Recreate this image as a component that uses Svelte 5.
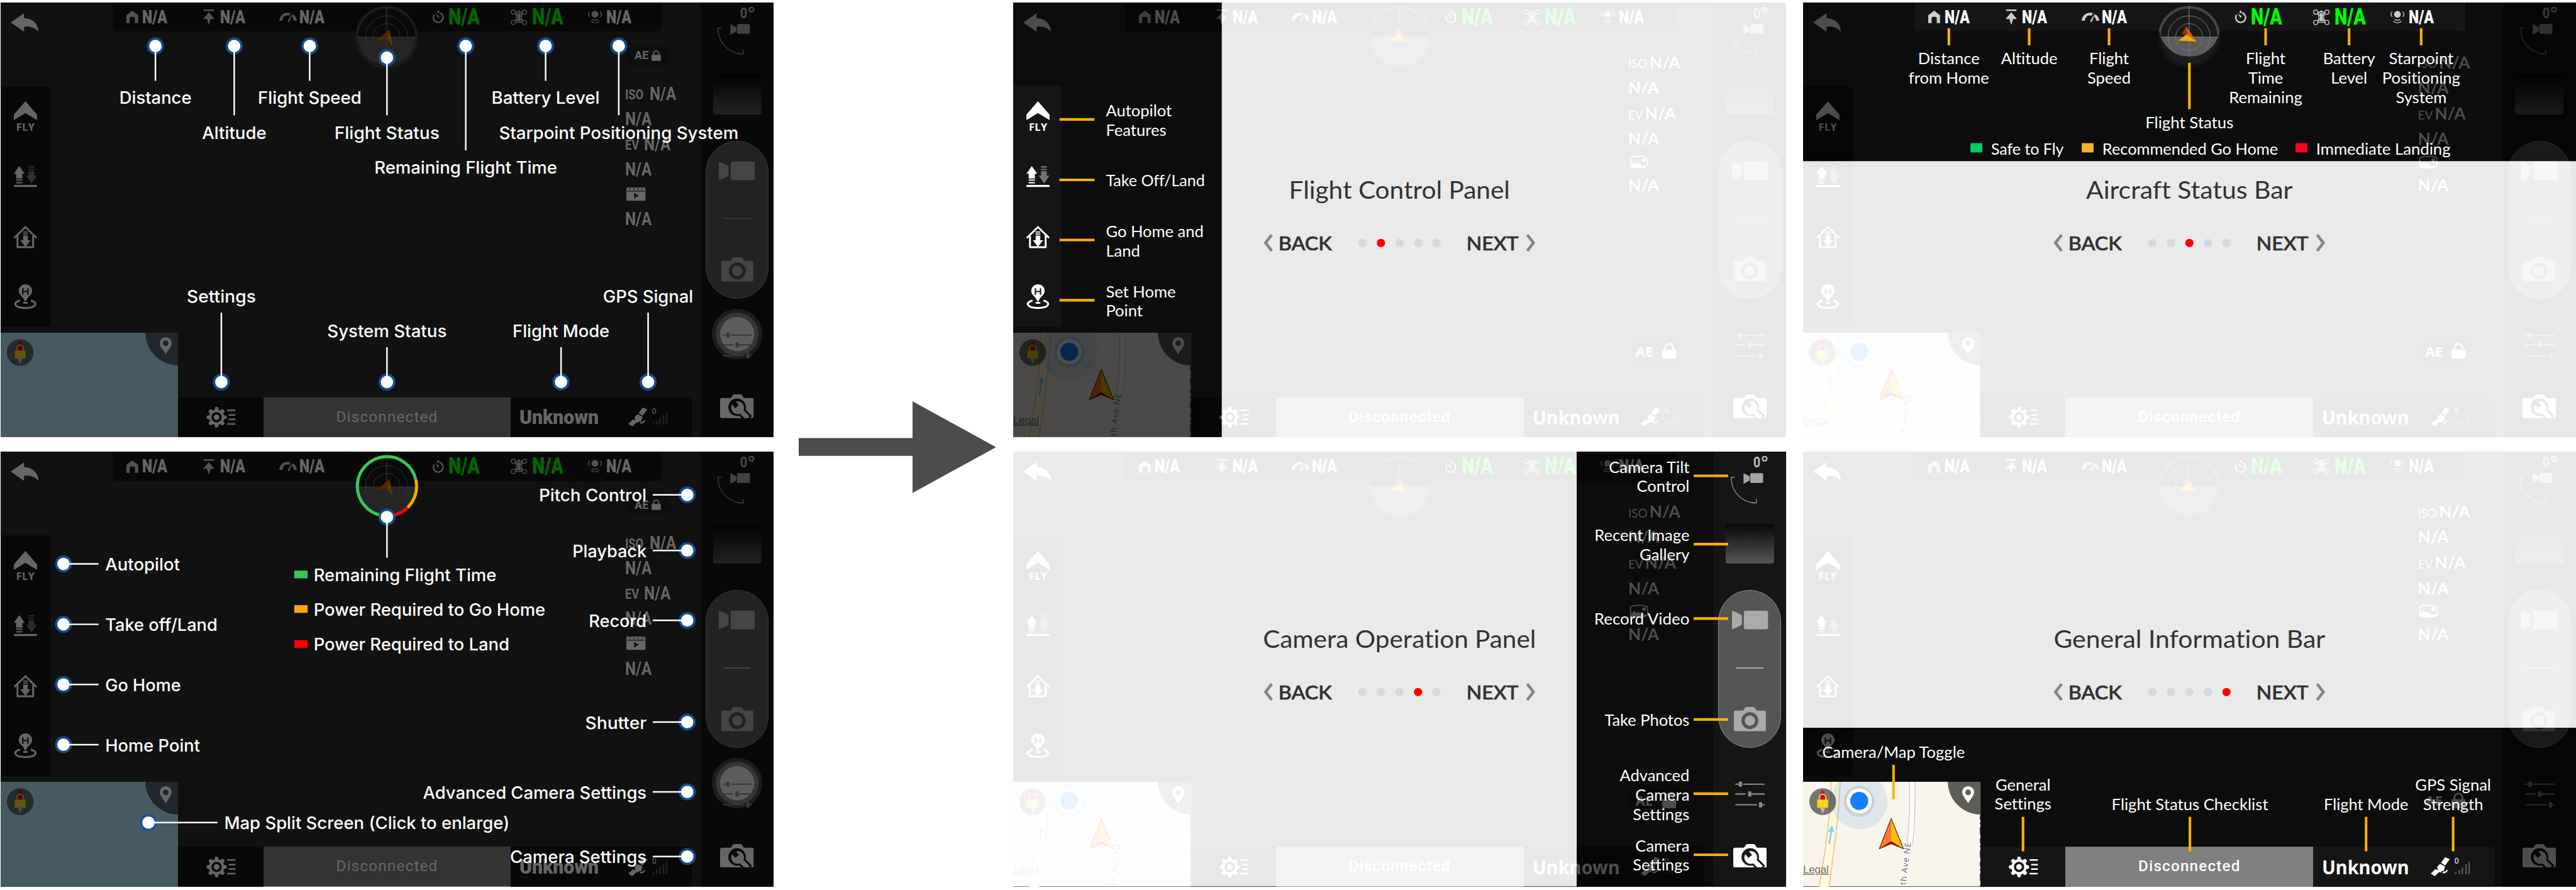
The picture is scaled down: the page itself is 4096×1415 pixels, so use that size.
<script>
  const blue = {
    font: 'sans',
    size: 33,
    rise: 12,
    lead: 37.5
  };
  const amber = { font: 'lato', size: 31.2, rise: 11, lead: 37.5 };

  // Text: x, y (vertical centre of the block), lines, anchor, optional width
  const screens = [
    {
      id: 'overview-status',
      gen: 'old',
      style: blue,
      marks: [
        [300.5, 84.4, 300.5, 152], [453.5, 84.4, 453.5, 219], [600, 84.4, 600, 152],
        [750, 107, 750, 219], [903, 84.4, 903, 287], [1058, 84.4, 1058, 152],
        [1200, 84.4, 1200, 219], [428.5, 736.7, 428.5, 602], [750, 736.7, 750, 669],
        [1088, 736.7, 1088, 669], [1257, 736.7, 1257, 602]
      ],
      texts: [
        [300.5, 185, ['Distance'], 'middle', 140], [453.5, 252.5, ['Altitude'], 'middle', 125],
        [600, 185, ['Flight Speed'], 'middle', 201], [750, 252.5, ['Flight Status'], 'middle', 204],
        [903, 320, ['Remaining Flight Time'], 'middle', 355], [1058, 185, ['Battery Level'], 'middle', 210],
        [1200, 252.5, ['Starpoint Positioning System'], 'middle', 465],
        [428.5, 570.5, ['Settings'], 'middle', 134], [1257, 570.5, ['GPS Signal'], 'middle', 175],
        [750, 638, ['System Status'], 'middle', 232], [1088, 638, ['Flight Mode'], 'middle', 188]
      ]
    },
    {
      id: 'flight-control',
      gen: 'new',
      style: amber,
      title: 'Flight Control Panel',
      step: 1,
      width: 429,
      dark: 'M0 0H405V844H0Z',
      light: 'M405 0H1501V844H405Z',
      hole: 'M0 162H89a6 6 0 0 1 6 6V624a6 6 0 0 1-6 6H0Z',
      bars: [[90, 227, 158, 227], [90, 344.4, 158, 344.4], [90, 461, 158, 461], [90, 578, 158, 578]],
      texts: [
        [180, 229, ['Autopilot', 'Features'], 'start'], [180, 346, ['Take Off/Land'], 'start', 192],
        [180, 463, ['Go Home and', 'Land'], 'start'], [180, 580, ['Set Home', 'Point'], 'start']
      ]
    },
    {
      id: 'aircraft-status',
      gen: 'new',
      style: amber,
      title: 'Aircraft Status Bar',
      step: 2,
      width: 401,
      dark: 'M0 0H1501V308H0Z',
      light: 'M0 308H1501V844H0Z',
      hole: 'M217 0H1284V50a6 6 0 0 1-6 6H809A60 60 0 0 1 691 56H223a6 6 0 0 1-6-6Z',
      bars: [
        [283, 50, 283, 83], [439, 50, 439, 83], [594, 50, 594, 83], [750, 117, 750, 207],
        [898, 50, 898, 83], [1060, 50, 1060, 83], [1200, 50, 1200, 83]
      ],
      texts: [
        [283, 128, ['Distance', 'from Home'], 'middle'], [439, 109, ['Altitude'], 'middle'],
        [594, 128, ['Flight', 'Speed'], 'middle'], [750, 233, ['Flight Status'], 'middle', 171],
        [898, 146.5, ['Flight', 'Time', 'Remaining'], 'middle'], [1060, 128, ['Battery', 'Level'], 'middle'],
        [1200, 146.5, ['Starpoint', 'Positioning', 'System'], 'middle'],
        [365, 284.5, ['Safe to Fly'], 'start', 141], [581, 284.5, ['Recommended Go Home'], 'start', 341],
        [996, 284.5, ['Immediate Landing'], 'start', 261]
      ],
      swatches: [[325, 273, 23, 18, '#00cc66'], [541, 273, 23, 18, '#ffae30'], [956, 273, 23, 18, '#ff0020']]
    },
    {
      id: 'overview-camera',
      gen: 'old',
      style: blue,
      gauge: true,
      marks: [
        [750, 127, 750, 206], [122, 218, 190, 218], [122, 335.3, 190, 335.3], [122, 452, 190, 452],
        [122, 569, 190, 569], [287, 720, 421, 720], [1333, 84, 1266, 84], [1333, 192, 1266, 192],
        [1333, 327.6, 1266, 327.6], [1333, 525, 1266, 525], [1333, 660.6, 1266, 660.6], [1333, 786, 1266, 786]
      ],
      texts: [
        [203, 219, ['Autopilot'], 'start', 145], [203, 336, ['Take off/Land'], 'start', 218],
        [203, 453, ['Go Home'], 'start', 147], [203, 570, ['Home Point'], 'start', 184],
        [607.6, 239.5, ['Remaining Flight Time'], 'start', 355],
        [607.6, 307, ['Power Required to Go Home'], 'start', 450],
        [607.6, 374, ['Power Required to Land'], 'start', 380],
        [434, 721, ['Map Split Screen (Click to enlarge)'], 'start', 554],
        [1254, 85, ['Pitch Control'], 'end', 209], [1254, 193, ['Playback'], 'end', 144],
        [1254, 328.5, ['Record'], 'end', 112], [1254, 526, ['Shutter'], 'end', 119],
        [1254, 661.5, ['Advanced Camera Settings'], 'end', 434], [1254, 787, ['Camera Settings'], 'end', 265]
      ],
      swatches: [[570, 231, 26, 15, '#34c759'], [570, 298, 26, 15, '#f5a800'], [570, 366, 26, 15, '#ff0000']]
    },
    {
      id: 'camera-operation',
      gen: 'new',
      style: amber,
      title: 'Camera Operation Panel',
      step: 3,
      width: 530,
      dark: 'M1094 0H1501V844H1094Z',
      light: 'M0 0H1094V844H0Z',
      hole: 'M1359 0H1501V844H1359Z',
      bars: [
        [1321, 47, 1388, 47], [1321, 179.6, 1388, 179.6], [1321, 324, 1388, 324],
        [1321, 520, 1388, 520], [1321, 664, 1388, 664], [1321, 782.6, 1388, 782.6]
      ],
      texts: [
        [1313, 49, ['Camera Tilt', 'Control'], 'end'], [1313, 181, ['Recent Image', 'Gallery'], 'end'],
        [1313, 325, ['Record Video'], 'end', 185], [1313, 521.6, ['Take Photos'], 'end', 165],
        [1313, 666.6, ['Advanced', 'Camera', 'Settings'], 'end'], [1313, 783.7, ['Camera', 'Settings'], 'end']
      ]
    },
    {
      id: 'general-information',
      gen: 'new',
      style: amber,
      title: 'General Information Bar',
      step: 4,
      width: 527,
      dark: 'M0 536H1501V844H0Z',
      light: 'M0 0H1501V536H0Z',
      hole: 'M0 641H345V767H1336a6 6 0 0 1 6 6V838a6 6 0 0 1-6 6H0Z',
      bars: [
        [175.6, 608, 175.6, 675], [427, 709, 427, 776], [751, 709, 751, 776],
        [1093, 709, 1093, 776], [1262, 709, 1262, 776]
      ],
      texts: [
        [175.6, 583.7, ['Camera/Map Toggle'], 'middle', 277], [427, 665.5, ['General', 'Settings'], 'middle'],
        [751, 684.8, ['Flight Status Checklist'], 'middle', 304], [1093, 684.8, ['Flight Mode'], 'middle', 164],
        [1262, 666, ['GPS Signal', 'Strength'], 'middle']
      ]
    }
  ];
  const metaOld = [['ISO', 'N/A'], ['', 'N/A'], ['EV', 'N/A'], ['', 'N/A'], ['clip', ''], ['', 'N/A']];
  const metaNew = [['ISO', 'N/A'], ['', 'N/A'], ['EV', 'N/A'], ['', 'N/A'], ['photo', ''], ['', 'N/A']];
</script>

{#snippet statusBar()}
  <div class="topbar">
    <div class="stat">
      <svg class="i-home" viewBox="0 0 23 24"><path d="M11.5 0 23 9v15h-6.5v-9a3 3 0 0 0-3-3h-4a3 3 0 0 0-3 3v9H0V9z" /></svg>
      <span class="na">N/A</span>
    </div>
    <div class="stat s-alt">
      <svg class="i-alt" viewBox="0 0 22 29"><path d="M1 0h20v3H1zM11 5.500 22 18.500h-7.500L11.500 29h-1L7.500 18.500H0z" /></svg>
      <span class="na">N/A</span>
    </div>
    <div class="stat s-speed">
      <svg class="i-speed" viewBox="0 0 34 18">
        <path d="M0 16C1 4 11-2 22 1L19 6C12 4 7 8 6 16zM26 3c5 3 8 8 8 13h-6c0-3-1-6-4-8z" />
        <path d="M25.500 1 20 18l-4-.5z" />
      </svg>
      <span class="na">N/A</span>
    </div>
    <div class="stat s-time">
      <svg class="i-time" viewBox="0 0 24 24">
        <path class="ln" d="M15 4.200A9.500 9.500 0 1 1 4 8" />
        <circle cx="12" cy="2.300" r="2.300" />
        <path d="M6 5l8 6-2.500 3z" />
      </svg>
      <span class="na go">N/A</span>
    </div>
    <div class="stat s-batt">
      <svg class="i-batt" viewBox="0 0 32 28">
        <g class="thin">
          <path d="M8 8 5 8a4 4 0 1 1 4-4l0 4 4 3M24 8l3 0a4 4 0 1 0-4-4l0 4-4 3M8 20l-3 0a4 4 0 1 0 4 4l0-4 4-3M24 20l3 0a4 4 0 1 1-4 4l0-4-4-3" />
          <path d="M11 4h10v20H11z" />
        </g>
        <path d="M13 6h6v16h-6zM14 1h4v3h-4z" />
      </svg>
      <span class="na go">N/A</span>
    </div>
    <div class="stat s-star">
      <svg class="i-star" viewBox="0 0 27 25">
        <circle cx="13.500" cy="7" r="6.600" />
        <path class="thin" d="M3.500 2C0 5 0 9 3.500 12M23.500 2c3.500 3 3.500 7 0 10M8 17c3 2 8 2 11 0M5.500 20.500c5 4 11 4 16 0" />
      </svg>
      <span class="na">N/A</span>
    </div>
  </div>
{/snippet}

{#snippet compass(gen, gauge)}
  <svg class="compass" viewBox="-62 -62 124 124">
    {#if !gauge}<circle class="bezel" r="57.500" />{/if}
    <circle class="dial" r="55" />
    <path class="ground" d="M-55 0A55 55 0 0 0 55 0z" />
    <circle class="orbit" r="41" />
    <circle class="orbit" r="26" />
    <path class="cross" d="M-60 .5H60M0-60V60" />
    {#if gen === 'old'}
      <path fill="#c9620c" d="M5-15-21 9 1 3z" />
      <path fill="#d79b00" d="M5-15 12 19 1 3z" />
    {:else}
      <path fill="#8a3408" d="M-6-21-14-6-3-3z" />
      <path fill="#d4610e" d="M-6-21 15 9-3-3z" />
      <path fill="#f2a800" d="M-21 7-5-5 15 9z" />
    {/if}
  </svg>
{/snippet}

{#snippet map(gen)}
  <div class="map">
    <svg viewBox="0 0 345 203">
      {#if gen === 'old'}
        <rect class="water" width="345" height="203" />
      {:else}
        <rect class="land" width="345" height="203" />
        <path class="road-y" d="M54.500-2C55 45 49 75 44 125L31 206H50L61 125C66 80 71 45 72-2z" />
        <path class="kerb" d="M212-2C212 60 212 80 207 122" />
        <path class="road-w" d="M212-2C212 60 212 80 207 122" />
        <circle class="halo" cx="109" cy="37" r="55" />
        <text class="street" transform="translate(199 201) rotate(-83)" textLength="83">th Ave NE</text>
        <text class="street" transform="translate(47 212) rotate(-86)">E</text>
        <path class="lane" d="M51 121 55 92" />
        <path class="lane-head" d="M47 98 56 85 61 99 55 95z" />
        <text class="legal" x="0" y="177" textLength="50">Legal</text>
        <path class="edge" d="M344 65V203" />
        <circle class="glow" cx="109" cy="38" r="30" />
        <circle cx="109" cy="37" r="24.500" fill="#fff" />
        <circle cx="109" cy="37" r="17.500" fill="#1480ff" />
        <path fill="#ff7a2a" d="M171 71 148 130 171 118z" />
        <path fill="#ffb90f" d="M171 71 195 130 171 118z" />
        <path fill="#8c1406" d="M148 130 171 115 195 130 171 121z" />
        <path class="nose" d="M171 71 148 130 171 120 195 130z" />
      {/if}
      <path class="tag" d="M281 0H345V63.500A64 64 0 0 1 281 0z" />
      <path fill="#fff" fill-rule="evenodd" d="M320.500 8.500a11.500 11.500 0 0 1 11.500 12c0 7-8 14-11.500 21.500C317 34.500 309 27.500 309 20.500a11.500 11.500 0 0 1 11.500-12zm0 6.500a5.500 5.500 0 1 0 0 11 5.500 5.500 0 1 0 0-11z" />
      <circle class="badge" cx="38" cy="38.500" r="26" />
      <path fill="#c8003a" d="M38 15l5 9v12H33V24z" />
      <path fill="#bbb" d="M33 50h10l-5 12z" />
      <path class="shackle" d="M32 36v-6a6 6 0 0 1 12 0v6" />
      <rect x="27.500" y="34.500" width="21" height="15.500" fill="#ffd21e" />
    </svg>
  </div>
{/snippet}

{#snippet hud(s)}
  <div class="hud">
    <div class="field">
      <div class="top">
        <svg class="back" viewBox="0 0 54 36"><path d="M0 18 26 0v9.500C43 10.500 53 20 54 36 46 27 38 25.500 26 26v10z" /></svg>
        {@render statusBar()}
      </div>
      <div class="rail">
        <svg class="i-fly" viewBox="0 0 45 37"><path d="M22.500 0 45 26v10.500L22.500 23 0 36.500V26z" /></svg>
        <span class="fly">FLY</span>
        <svg class="i-take" viewBox="0 0 45 41">
          <path d="M10.500 0 21 15h-4.500v9h-12v-9H0zM4.500 26h12v2.500h-12zM4.500 31h12v2.500h-12z" />
          <rect y="36.500" width="45" height="4" rx="1.500" />
          <path class="mute" d="M28.500 0h11v3h-11zM28.500 5.500h11V8h-11zM28.500 10h11v8.500H45L34.500 34 24 18.500h4.500z" />
        </svg>
        <svg class="i-go" viewBox="0 0 45 43">
          <path class="wall" d="M2 22.500 22.500 2.500 43 22.500M7 20v21.500h30.500V20" />
          <path d="M18 11h9v2.200h-9zM18 15h9v2.200h-9zM18 19h9v9h5.500L22.500 41l-10-13H18z" />
        </svg>
        <svg class="i-pin" viewBox="0 0 45 48">
          <path d="M22.500 0a13 13 0 0 1 13 13.500c0 7-9 11-12 19.500h-2c-3-8.500-12-12.500-12-19.500A13 13 0 0 1 22.500 0z" />
          <path class="h" d="M17.500 7.500v13M27.500 7.500v13M17.500 14h10" />
          <path class="ring" d="M12 31.500C-3 35 0 46 22.500 46S48 35 33 31.500" />
          <ellipse cx="22.500" cy="36" rx="5" ry="2" />
        </svg>
      </div>
      <div class="foot">
        {@render map(s.gen)}
        <div class="infobar">
          <div class="cfg">
            <svg class="i-gear" viewBox="0 0 56 40">
              <path fill-rule="evenodd" d="M17 0h5l1.500 5.500 3 1.300L31.500 4l4 4-3 4.700 1.300 3.300 5.200 1.500v5L33.800 24l-1.300 3.300 3 4.700-4 4-5-2.800-3 1.300L22 40h-5l-1.500-5.500-3-1.300L7.500 36l-4-4 3-4.700L5.200 24 0 22.500v-5L5.200 16l1.300-3.300L3.500 8l4-4 5 2.800 3-1.300zM19.500 10a10 10 0 1 0 0 20 10 10 0 1 0 0-20z" />
              <circle cx="19.500" cy="20" r="5.500" />
              <path d="M40 5h16v3H40zM43 14h13v3H43zM43 22.500h13v3H43zM40 31.500h16v3H40z" />
            </svg>
          </div>
          <div class="sys">Disconnected</div>
          <div class="mode">
            <span class="unk">Unknown</span>
            <svg class="i-sat" viewBox="0 0 80 40">
              <path d="M28 1l9 4-9 12-8-5zM18 14l10 5-3 9-4 0-2 3-7-4 2-3-2-4zM9 24l8 5-9 9-8-5zM23 29c4 1 7-1 8-4l2 1c-1 5-5 7-10 6z" />
              <text class="zero" x="46" y="13">0</text>
              <path class="dim" d="M47 30h3v4h-3zM54 26h3v8h-3zM60 21h3v13h-3zM67 15h3v19h-3zM73 10h3v24h-3z" />
            </svg>
          </div>
        </div>
      </div>
      <div class="meta">
        {#each s.gen === 'old' ? metaOld : metaNew as [label, value]}
          <div class="row" class:pic={label === 'photo'}>
            {#if label === 'clip'}
              <svg class="i-clip" viewBox="0 0 37 26"><path fill-rule="evenodd" d="M2 0h33a2 2 0 0 1 2 2v22a2 2 0 0 1-2 2H2a2 2 0 0 1-2-2V2a2 2 0 0 1 2-2zM1.500 6.500v1.300h34V6.500zM7 1 5 5h1.500l2-4zm8 0-2 4h1.500l2-4zm8 0-2 4h1.500l2-4zm8 0-2 4h1.500l2-4zM15 10.500v11l9-5.500z" /></svg>
            {:else if label === 'photo'}
              <svg class="i-photo" viewBox="0 0 37 26">
                <path class="frame" d="M2 5C6 .5 31 .5 35 5v16c-4 4.500-29 4.500-33 0z" />
                <path d="M3 20 9 12l5 5 3-3 8 6h9v2c-6 3-26 3-31 0z" /><circle cx="28" cy="9" r="3.500" />
              </svg>
            {:else}
              {#if label}<small class={label.toLowerCase()}>{label}</small>{/if}<b>{value}</b>
            {/if}
          </div>
        {/each}
      </div>
      <div class="ae"><span>AE</span>
        <svg viewBox="0 0 28 31"><path d="M0 13h28v18H0z" /><path class="bow" d="M6 14V9a8 7.500 0 0 1 16 0v5" /></svg>
      </div>
    </div>
    <div class="side">
      <svg class="i-tilt" viewBox="0 0 82 96">
        <text class="deg" x="45" y="25.500" textLength="14" lengthAdjust="spacingAndGlyphs">0</text>
        <circle class="degree" cx="67" cy="9" r="4.300" />
        <g opacity=".62">
          <path d="M26 37 38 43v8l-12 7z" /><rect x="39" y="37" width="25" height="19" rx="2" />
        </g>
        <path class="arc" d="M9 45H2C2 72 22 95 51 95V87" />
      </svg>
      <div class="thumb"></div>
      <div class="pill">
        <svg class="i-video" viewBox="0 0 70 36"><path d="M0 0c6 2 12 4 19 9v18c-7 5-13 7-19 9z" /><rect x="23" width="47" height="36" rx="4" /></svg>
        <i></i>
        <svg class="i-cam" viewBox="0 0 62 47"><path fill-rule="evenodd" d="M3 7h15l4-6 3-1h12l3 1 4 6h15a3 3 0 0 1 3 3v34a3 3 0 0 1-3 3H3a3 3 0 0 1-3-3V10a3 3 0 0 1 3-3zM31 10a16.500 16.500 0 1 0 0 33 16.500 16.500 0 1 0 0-33z" /><circle cx="31" cy="26.500" r="10" /></svg>
      </div>
      <svg class="i-tune" viewBox="0 0 98 98">
        {#if s.gen === 'old'}
          <circle cx="49" cy="49" r="49" fill="#474747" />
          <circle cx="49" cy="49" r="42.500" fill="#858585" stroke="#4a4a4a" stroke-width="2" />
          <circle cx="49" cy="49" r="33" fill="#e8e8e8" stroke="#ccc" />
        {/if}
        <g class="sliders">
          <path d="M21 51h8M36 51h42M21 70h20M50 70h28M21 91h42M71 91h7" />
          <path class="knob" d="M28 51h6M46 70h6M67 91h6" />
        </g>
      </svg>
      <svg class="i-fix" viewBox="0 0 65 46">
        <path d="M3 7h18l4-6 2-1h13l2 1 4 6h17l2 2v35l-2 2H3l-3-2V9z" />
        <circle class="void" cx="33" cy="25" r="17" />
        <path class="grip-edge" d="M38 30 56 48" />
        <circle cx="34" cy="26" r="12.500" />
        <path class="grip" d="M36 28 54 46" />
        <path class="jaw" d="M24 13 33 24" />
      </svg>
    </div>
    {@render compass(s.gen, s.gauge)}
  </div>
{/snippet}

<main class="sheet">
  {#each screens as s (s.id)}
    <section class="screen {s.gen} {s.id}">
      {@render hud(s)}
      <svg class="notes {s.style.font}" viewBox="0 0 1501 844">
        {#if s.gen === 'old'}
          <path fill="#000" fill-opacity=".6" d="M0 0H1501V844H0Z" />
          {#if s.gauge}
            <g class="gauge" transform="translate(750 67.300)">
              <path stroke="#34c759" d="M-10 56.600A57.500 57.500 0 1 1 56-13" />
              <path stroke="#f5a800" d="M56-13A57.500 57.500 0 0 1 40 41.300" />
              <path stroke="#f00" d="M40 41.300A57.500 57.500 0 0 1 8 57" />
            </g>
          {/if}
          {#each s.marks as [x1, y1, x2, y2]}
            <circle class="outer" cx={x1} cy={y1} r="16.500" />
            <line class="lead" {x1} {y1} {x2} {y2} />
            <circle class="inner" cx={x1} cy={y1} r="12" />
          {/each}
        {:else}
          <path fill="#000" fill-opacity=".7" fill-rule="evenodd" d={s.dark + s.hole} />
          <path fill="#fff" fill-opacity=".9" d={s.light} />
          {#each s.bars as [x1, y1, x2, y2]}
            <line class="bar" {x1} {y1} {x2} {y2} />
          {/each}
        {/if}
        {#each s.swatches ?? [] as [x, y, width, height, fill]}
          <rect {x} {y} {width} {height} {fill} />
        {/each}
        {#each s.texts as [x, y, lines, anchor, w]}
          {#each lines as line, i}
            <text
              {x}
              y={y + s.style.rise + (i - (lines.length - 1) / 2) * s.style.lead}
              font-size={s.style.size}
              text-anchor={anchor}
              textLength={w}
              lengthAdjust="spacingAndGlyphs">{line}</text>
          {/each}
        {/each}
        {#if s.title}
          <text class="title" x="750" y="380.500" text-anchor="middle" textLength={s.width} lengthAdjust="spacingAndGlyphs">{s.title}</text>
          <path class="chev" d="M502 451 490 466.500 502 482M998 451 1010 466.500 998 482" />
          <text class="nav" x="515" y="481.500" textLength="104" lengthAdjust="spacingAndGlyphs">BACK</text>
          <text class="nav" x="880" y="481.500" textLength="101" lengthAdjust="spacingAndGlyphs">NEXT</text>
          {#each [0, 1, 2, 3, 4] as n}
            <circle cx={678 + n * 36} cy="466.700" r="8" fill={n === s.step ? '#f00' : '#d9d9d9'} />
          {/each}
        {/if}
      </svg>
    </section>
  {/each}
  <svg class="becomes" viewBox="0 0 383 178"><path d="M0 71.500H221V0L383 89 221 178V106H0z" /></svg>
</main>

<style>
  :global(body) {
    margin: 0;
    overflow: hidden;
    background: #fff;
  }
  .sheet {
    zoom: 0.81904;
    display: grid;
    grid-template-columns: 1501px 465px 1501px 32px 1501px;
    grid-template-rows: 844px 844px;
    row-gap: 28px;
    box-sizing: border-box;
    width: 5001px;
    height: 1728px;
    padding: 5px 0 0 1px;
    background: #fff;
    font-family: Inter, 'Liberation Sans', sans-serif;
  }
  .screen {
    position: relative;
    overflow: hidden;
    display: grid;
    color: #fff;
  }
  .screen:nth-of-type(3n + 1) { grid-column: 1; }
  .screen:nth-of-type(3n + 2) { grid-column: 3; }
  .screen:nth-of-type(3n) { grid-column: 5; }
  .screen:nth-of-type(-n + 3) { grid-row: 1; }
  .screen:nth-of-type(n + 4) { grid-row: 2; }
  .becomes {
    grid-column: 2;
    grid-row: 1 / 3;
    place-self: center start;
    width: 383px;
    height: 178px;
    margin: 10px 0 0 48px;
    fill: #4c4c4c;
  }

  svg { display: block; fill: #fff; overflow: visible; }

  .hud {
    position: relative;
    display: grid;
    grid-template-columns: 1359px 142px;
    height: 844px;
    background: #2b2b2b;
  }
  .field {
    display: grid;
    grid-template: 162px 479px 203px / 1fr;
  }
  .top { display: flex; align-items: flex-start; grid-area: 1 / 1; }
  .back { width: 54px; height: 36px; margin: 21px 143px 0 20px; }
  .topbar {
    display: grid;
    grid-template-columns: 150px 147px 297px 153px 150px 1fr;
    align-items: center;
    box-sizing: border-box;
    width: 1067px;
    height: 56.5px;
    padding-left: 27px;
    border-radius: 0 0 6px 6px;
    background: rgba(0, 0, 0, 0.5);
  }
  .stat { display: flex; align-items: center; }
  .stat svg { flex: none; fill: #cbcbcb; }
  .na {
    font: 900 36px/40px Roboto, sans-serif;
    margin-top: 1px;
    transform: scaleX(0.78);
    transform-origin: left;
  }
  .na.go { color: #0f0; font-size: 45px; }
  .i-home { width: 23px; height: 24px; margin-right: 8px; }
  .i-alt { width: 22px; height: 29px; margin-right: 10px; }
  .i-speed { width: 34px; height: 18px; margin-right: 5px; }
  .i-time { width: 24px; height: 24px; margin-right: 8px; }
  .i-batt { width: 32px; height: 28px; margin-right: 9px; }
  .i-star { width: 27px; height: 25px; margin-right: 8px; }
  .ln, .thin { fill: none; stroke: #cbcbcb; stroke-width: 3; }
  .thin { stroke-width: 1.7; }

  .compass {
    position: absolute;
    left: 688px;
    top: 5.3px;
    width: 124px;
    height: 124px;
  }
  .bezel { fill: none; stroke: #444; stroke-width: 5.5; }
  .dial { fill: #191919; }
  .ground { fill: #5c5c5c; }
  .orbit { fill: none; stroke: #777; stroke-width: 1.2; }
  .cross { stroke: #777; stroke-width: 1.5; fill: none; }

  .rail {
    grid-area: 2 / 1;
    display: flex;
    flex-direction: column;
    align-items: center;
    box-sizing: border-box;
    width: 97px;
    height: 468px;
    padding-top: 30px;
    border-radius: 0 6px 6px 0;
    background: rgba(0, 0, 0, 0.5);
  }
  .rail svg { width: 45px; flex: none; }
  .i-fly { height: 37px; }
  .fly {
    height: 88px;
    padding-top: 3px;
    box-sizing: border-box;
    font: 700 20px/20px 'Open Sans', sans-serif;
    letter-spacing: 0.5px;
  }
  .i-take { height: 41px; margin-bottom: 75px; }
  .i-go { height: 43px; margin-bottom: 71px; }
  .i-pin { height: 48px; }
  .mute { fill: #737373; }
  .wall { fill: none; stroke: #fff; stroke-width: 3.6; stroke-linejoin: round; stroke-linecap: round; }
  .h { fill: none; stroke: #171717; stroke-width: 2.6; }
  .ring { fill: none; stroke: #fff; stroke-width: 3.6; }

  .foot { grid-area: 3 / 1; display: flex; align-items: flex-end; }
  .map { width: 345px; height: 203px; overflow: hidden; }
  .map svg { width: 345px; height: 203px; overflow: hidden; }
  .water { fill: #b1e1f3; }
  .land { fill: #f9f5ed; }
  .road-y { fill: #fdfbdb; stroke: #f6c08c; stroke-width: 2; }
  .kerb { fill: none; stroke: #cfc6bc; stroke-width: 12; }
  .road-w { fill: none; stroke: #fff; stroke-width: 9; }
  .halo { fill: #4c9bf0; fill-opacity: 0.15; }
  .glow { fill: #234; fill-opacity: 0.12; }
  .street { font: 16px 'Open Sans', sans-serif; fill: #666; stroke: #fff; stroke-width: 3; paint-order: stroke; }
  .lane { stroke: #7fcff8; stroke-width: 3.5; }
  .lane-head { fill: #7fcff8; }
  .legal { font: 21px 'Liberation Sans', sans-serif; fill: #777; text-decoration: underline; }
  .edge { stroke: #555; stroke-width: 2; stroke-dasharray: 9 5 3 6 14 8; fill: none; }
  .nose { fill: none; stroke: #6b2d10; stroke-width: 1.5; stroke-linejoin: round; }
  .tag { fill: rgba(0, 0, 0, 0.62); }
  .old .tag { fill: rgba(0, 0, 0, 0.55); }
  .badge { fill: rgba(0, 0, 0, 0.52); }
  .shackle { fill: none; stroke: #ffc800; stroke-width: 2.6; }

  .infobar {
    display: grid;
    grid-template-columns: 165px 481px 351px;
    align-items: center;
    height: 77px;
    border-radius: 0 6px 6px 0;
    background: rgba(0, 0, 0, 0.5);
  }
  .i-gear { width: 57px; height: 40px; margin-left: 55px; }
  .sys {
    height: 77px;
    background: #808080;
    font: 500 29.5px/76px Roboto, sans-serif;
    letter-spacing: 1.5px;
    text-align: center;
  }
  .old .sys { font-weight: 400; }
  .mode { display: flex; align-items: center; padding-left: 17px; }
  .unk {
    width: 160px;
    font: 700 38px/40px 'Noto Sans', sans-serif;
    transform: scaleX(0.93);
    transform-origin: left;
  }
  .old .unk { font: 900 39px/40px Roboto, sans-serif; transform: scaleX(0.94); }
  .i-sat { width: 80px; height: 40px; margin-left: 51px; flex: none; }
  .unk { flex: none; }
  .zero { font: 15px Roboto, sans-serif; }
  .dim { fill: #555; }

  .meta {
    grid-area: 1 / 1 / 4 / 2;
    justify-self: start;
    margin: 91px 0 0 1194px;
    text-shadow: 0 1px 4px rgba(0, 0, 0, 0.5);
  }
  .row { height: 49.6px; display: flex; align-items: center; }
  .row small { font: 400 23px/40px Lato, sans-serif; margin: 7px 4px 0 0; }
  .row b { font: 700 32px/40px Lato, sans-serif; }
  .row.pic { height: 40px; }
  .old .meta { margin: 153px 0 0 1213px; }
  .old .row { height: 48.7px; }
  .old .row small {
    font: 700 27px/40px Roboto, sans-serif;
    margin: 3px 0 0 0;
    transform: scaleX(0.82);
    transform-origin: left;
  }
  .old .row .iso { width: 47px; }
  .old .row .ev { width: 36px; }
  .old .row b {
    font: 700 35px/40px Roboto, sans-serif;
    transform: scaleX(0.84);
    transform-origin: left;
  }
  .i-clip, .i-photo { width: 37px; height: 26px; margin-left: 2px; }
  .frame { fill: none; stroke: #fff; stroke-width: 2.2; }

  .ae {
    grid-area: 1 / 1 / 4 / 2;
    display: flex;
    align-items: center;
    justify-content: space-between;
    box-sizing: border-box;
    width: 113px;
    height: 67px;
    margin: 643px 0 0 1192px;
    padding: 0 17px 0 15px;
    border-radius: 34px;
    border: 2px solid rgba(255, 255, 255, 0.06);
    background: rgba(0, 0, 0, 0.15);
    font: 700 27px/40px 'Open Sans', sans-serif;
  }
  .ae svg { width: 27px; height: 31px; }
  .bow { fill: none; stroke: #fff; stroke-width: 3.4; }
  .old .ae {
    width: 89px;
    height: 41px;
    margin: 83px 0 0 1213px;
    padding: 0 20px 0 18px;
    border: 0;
    font: 700 22px/40px Roboto, sans-serif;
  }
  .old .ae svg { width: 18px; height: 21px; }

  .side {
    display: flex;
    flex-direction: column;
    align-items: center;
    background: rgba(0, 0, 0, 0.5);
  }
  .i-tilt { width: 82px; height: 96px; margin: 5px 0 39px 5px; }
  .deg { font: 700 30px Roboto, sans-serif; fill: #b9b9b9; }
  .degree { fill: none; stroke: #b9b9b9; stroke-width: 2.8; }
  .arc { fill: none; stroke: #999; stroke-width: 1.5; }
  .thumb { width: 94px; height: 77px; border-radius: 5px; background: linear-gradient(#080808, #555); }
  .pill {
    display: flex;
    flex-direction: column;
    align-items: center;
    justify-content: space-between;
    box-sizing: border-box;
    width: 122px;
    height: 307px;
    margin-top: 51px;
    padding: 39px 0 32px;
    border: 1.5px solid #888;
    border-radius: 61px;
    background: #555;
  }
  .pill svg { fill: #aaa; }
  .pill i { width: 54px; height: 2px; background: #aaa; }
  .i-video { width: 70px; height: 36px; }
  .i-cam { width: 62px; height: 47px; }
  .i-tune { width: 98px; height: 98px; margin-top: 19px; }
  .sliders path { stroke: #8c8c8c; stroke-width: 2.6; fill: none; }
  .sliders .knob { stroke-width: 10; }
  .i-fix { width: 65px; height: 46px; margin-top: 69px; overflow: hidden; }
  .void { fill: #171717; }
  .grip-edge { fill: none; stroke: #171717; stroke-width: 17; }
  .grip { fill: none; stroke: #fff; stroke-width: 9.5; }
  .jaw { fill: none; stroke: #171717; stroke-width: 9; }

  .notes {
    position: absolute;
    inset: 0;
    width: 1501px;
    height: 844px;
  }
  .notes text { white-space: pre; font-variant-ligatures: none; }
  .sans text { font-family: Inter, sans-serif; font-weight: 500; }
  .lato text { font-family: Lato, sans-serif; }
  .outer { fill: #17529f; fill-opacity: 0.9; }
  .inner { fill: #fff; }
  .lead { stroke: #fff; stroke-width: 3; }
  .bar { stroke: #ffaf00; stroke-width: 5; }
  .gauge path { fill: none; stroke-width: 6; }
  .title { font-size: 47px; fill: #333; }
  .nav { font-size: 38px; font-weight: 500; fill: #333; stroke: #333; stroke-width: 0.9; }
  .chev { fill: none; stroke: #858585; stroke-width: 5.5; }
</style>
